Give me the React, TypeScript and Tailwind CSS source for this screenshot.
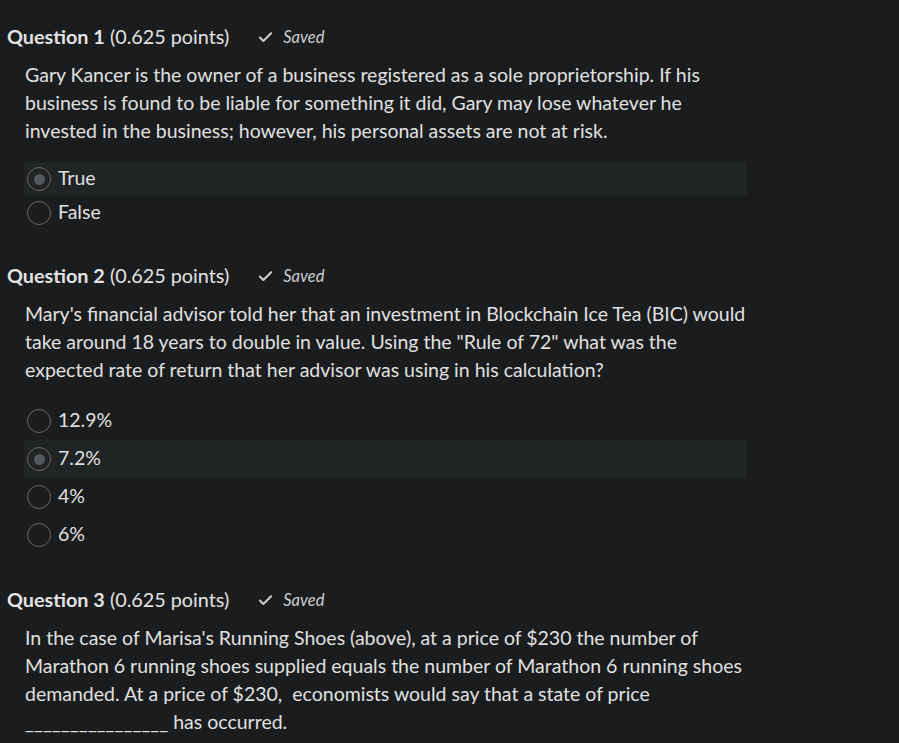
import { Check } from "lucide-react";

type Option = { label: string; selected?: boolean };

type Question = {
  n: number;
  text: React.ReactNode;
  options?: Option[];
  rowClass?: string;
  optionsTop?: string;
};

function Radio({ selected }: { selected?: boolean }) {
  return (
    <span className="flex h-[24px] w-[24px] shrink-0 items-center justify-center rounded-full border-[1.5px] border-[#6f6759]">
      {selected && <span className="h-[11px] w-[11px] rounded-full bg-[#56585b]" />}
    </span>
  );
}

function QuestionBlock({ q }: { q: Question }) {
  return (
    <section>
      <div className="flex h-[26px] items-center pl-[7px]">
        <h2 className="text-[19.8px] text-[#e3e3e3]">
          <span className="font-bold">Question {q.n}</span> (0.625 points)
        </h2>
        <span className="ml-[28px] flex items-center gap-[9px] text-[16.5px] italic text-[#cfcfcf]">
          <Check size={17} strokeWidth={2.8} className="text-[#cfcfcf]" />
          Saved
        </span>
      </div>
      <p className="mt-[11px] w-[748px] pl-[25px] text-[19.5px] leading-[28px] text-[#e0e0e0]">{q.text}</p>
      {q.options && (
        <ul className={`${q.optionsTop} w-[723px] ml-[24px]`}>
          {q.options.map((o) => (
            <li
              key={o.label}
              className={`flex items-center gap-[7px] pl-[3px] ${q.rowClass} ${o.selected ? "bg-[#212425]" : ""}`}
            >
              <Radio selected={o.selected} />
              <span className="-mt-[3px] text-[19.5px] text-[#e0e0e0]">{o.label}</span>
            </li>
          ))}
        </ul>
      )}
    </section>
  );
}

const questions: Question[] = [
  {
    n: 1,
    text: (
      <>
        Gary Kancer is the owner of a business registered as a sole proprietorship. If his business is found to be
        liable for something it did, Gary may lose whatever he invested in the business; however, his personal assets
        are not at risk.
      </>
    ),
    options: [{ label: "True", selected: true }, { label: "False" }],
    rowClass: "h-[34px]",
    optionsTop: "mt-[17px]",
  },
  {
    n: 2,
    text: (
      <>
        Mary's financial advisor told her that an investment in Blockchain Ice Tea (BIC) would take around 18 years to
        double in value. Using the "Rule of 72" what was the expected rate of return that her advisor was using in his
        calculation?
      </>
    ),
    options: [{ label: "12.9%" }, { label: "7.2%", selected: true }, { label: "4%" }, { label: "6%" }],
    rowClass: "h-[38px]",
    optionsTop: "mt-[18px]",
  },
  {
    n: 3,
    text: (
      <>
        In the case of Marisa's Running Shoes (above), at a price of $230 the number of Marathon 6 running shoes
        supplied equals the number of Marathon 6 running shoes demanded. At a price of $230,&nbsp; economists would say
        that a state of price <span className="whitespace-nowrap">________________</span> has occurred.
      </>
    ),
  },
];

export default function App() {
  return (
    <div className="min-h-[743px] bg-[#1b1c1e] pt-[24px] font-['Lato','Noto_Sans',sans-serif]">
      <div className="flex flex-col gap-[33px]">
        {questions.map((q) => (
          <QuestionBlock key={q.n} q={q} />
        ))}
      </div>
    </div>
  );
}
